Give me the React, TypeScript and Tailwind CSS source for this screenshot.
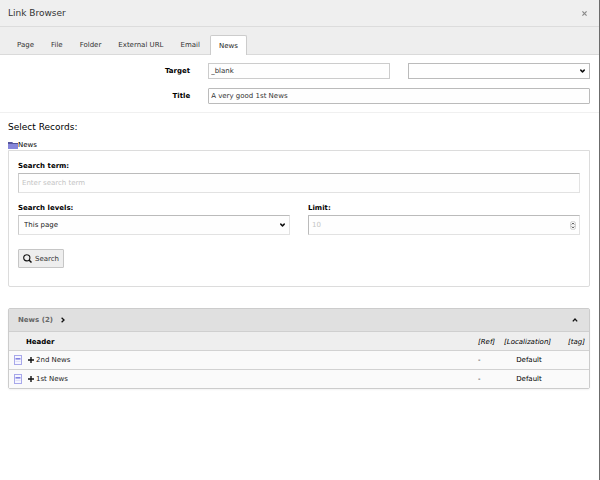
import React from 'react';
import { ChevronDown } from 'lucide-react';

interface NewsRecord {
  id: number;
  title: string;
  ref: string;
  localization: string;
}

const TABS = ['Page', 'File', 'Folder', 'External URL', 'Email', 'News'];

const RECORDS: NewsRecord[] = [
  { id: 2, title: '2nd News', ref: '-', localization: 'Default' },
  { id: 1, title: '1st News', ref: '-', localization: 'Default' },
];

const RecordIcon: React.FC = () => (
  <svg width="8" height="10" viewBox="0 0 8 10" className="block" aria-hidden="true">
    <rect x="0.5" y="0.5" width="7" height="9" fill="#f6f6ff" stroke="#a8a8ea" />
    <path d="M1.5 3h5v1.6h-5z" fill="#8484e0" />
    <path d="M1.5 6h5v0.8h-5z" fill="#dcdcf6" />
  </svg>
);

const FolderIcon: React.FC = () => (
  <svg width="10" height="7" viewBox="0 0 10 7" className="block shrink-0" aria-hidden="true">
    <path d="M0 0h4l1 1h5v6H0z" fill="#8686da" />
    <path d="M0 0h4l1 1h5v1H0z" fill="#55559c" />
  </svg>
);

const SearchIcon: React.FC = () => (
  <svg width="9" height="9" viewBox="0 0 9 9" fill="none" stroke="#111" aria-hidden="true">
    <circle cx="3.8" cy="3.8" r="3.1" strokeWidth="1.1" />
    <path d="M6 6l2.5 2.5" strokeWidth="1.5" />
  </svg>
);

const PlusIcon: React.FC = () => (
  <svg width="6" height="6" viewBox="0 0 6 6" stroke="#111" strokeWidth="1.4" aria-hidden="true">
    <path d="M3 0v6M0 3h6" />
  </svg>
);

const SpinnerIcon: React.FC = () => (
  <svg width="6" height="9" viewBox="0 0 6 9" fill="none" aria-hidden="true">
    <rect x="0.5" y="0.5" width="5" height="8" rx="2" fill="#f6f6f6" stroke="#d0d0d0" />
    <path d="M1.8 3.4L3 2.1l1.2 1.3M1.8 5.6L3 6.9l1.2-1.3" stroke="#444" strokeWidth="1" />
  </svg>
);

const Caret: React.FC = () => (
  <ChevronDown
    size={7}
    strokeWidth={5}
    className="pointer-events-none absolute top-1/2 right-1 -translate-y-1/2 text-[#111]"
  />
);

const field = 'block w-full appearance-none border bg-[#fefefe] text-[7px] outline-none';

export default function App() {
  return (
    <div className="min-h-screen border-r border-[#6b6b6b] bg-white font-['DejaVu_Sans',Verdana,sans-serif] text-[7px] leading-[10px] text-black">
      <header className="flex h-[27px] items-center justify-between border-b border-[#dcdcdc] bg-[#efefef] pr-3 pl-2">
        <h1 className="text-[9px] text-[#333]">Link Browser</h1>
        <button type="button" aria-label="Close" className="text-[#8a8a8a]">
          <svg width="5" height="5" viewBox="0 0 5 5" stroke="currentColor" strokeWidth="1.2" className="block">
            <path d="M0.4 0.4l4.2 4.2M4.6 0.4L0.4 4.6" />
          </svg>
        </button>
      </header>

      {/* Link type tabs */}
      <nav className="flex h-7 items-end gap-px border-b border-[#dadada] bg-[#eeeeee] pl-[9px]">
        {TABS.map((tab) => (
          <button
            key={tab}
            type="button"
            className={
              tab === 'News'
                ? '-mb-px ml-px h-5 rounded-t-xs border border-b-0 border-[#cccccc] bg-white px-2 text-[#222]'
                : 'h-[19px] px-2 text-[#333]'
            }
          >
            {tab}
          </button>
        ))}
      </nav>

      {/* Link attributes */}
      <form className="flex flex-col gap-[9px] border-b border-[#f0f0f0] py-2 pr-[9px] pl-2">
        <div className="flex items-center">
          <label htmlFor="target" className="w-[31.3%] text-right font-bold">Target</label>
          <div className="ml-[18px] grid flex-1 grid-cols-2 gap-[18px]">
            <input id="target" defaultValue="_blank" className={`${field} h-4 border-[#cccccc] px-[2px] text-[#333]`} />
            <div className="relative">
              <select aria-label="Target preset" className={`${field} h-4 border-[#bbbbbb] px-1`}>
                <option></option>
                <option>_top</option>
              </select>
              <Caret />
            </div>
          </div>
        </div>
        <div className="flex items-center">
          <label htmlFor="title" className="w-[31.3%] text-right font-bold">Title</label>
          <div className="ml-[18px] flex-1">
            <input
              id="title"
              defaultValue="A very good 1st News"
              className={`${field} h-4 rounded-[1px] border-[#bbbbbb] px-[2px] text-[#333]`}
            />
          </div>
        </div>
      </form>

      <main className="pt-2 pr-[9px] pl-2">
        <h2 className="text-[9px] leading-3">Select Records:</h2>
        <div className="mt-[7px] flex items-center">
          <FolderIcon />
          <span>News</span>
        </div>

        {/* Record search */}
        <form className="rounded-b-xs border border-[#dcdcdc] px-[9px] pt-[10px] pb-[18px]">
          <label htmlFor="term" className="block font-bold">Search term:</label>
          <input
            id="term"
            placeholder="Enter search term"
            className={`${field} mt-[2px] h-5 border-[#e2e2e2] border-t-[#bbbbbb] border-l-[#cccccc] px-[3px] placeholder:text-[#c4c4c4]`}
          />
          <div className="mt-[10px] grid grid-cols-2 gap-[18px]">
            <div>
              <label htmlFor="levels" className="block font-bold">Search levels:</label>
              <div className="relative mt-[2px]">
                <select id="levels" className={`${field} h-5 border-[#e2e2e2] border-t-[#bbbbbb] border-l-[#cccccc] px-[5px] text-[#222]`}>
                  <option>This page</option>
                  <option>1 level</option>
                </select>
                <Caret />
              </div>
            </div>
            <div>
              <label htmlFor="limit" className="block font-bold">Limit:</label>
              <div className="relative mt-[2px]">
                <input
                  id="limit"
                  inputMode="numeric"
                  placeholder="10"
                  className={`${field} h-5 border-[#e2e2e2] border-t-[#bbbbbb] border-l-[#bbbbbb] px-[3px] placeholder:text-[#c4c4c4]`}
                />
                <span className="pointer-events-none absolute inset-y-0 right-1 flex items-center">
                  <SpinnerIcon />
                </span>
              </div>
            </div>
          </div>
          <button
            type="button"
            className="mt-[14px] flex h-[19px] items-center gap-[3px] rounded-[1px] border border-[#c6c6c6] bg-[#eeeeee] px-1 text-[#333]"
          >
            <SearchIcon />
            Search
          </button>
        </form>

        {/* Record list */}
        <section className="mt-[21px] rounded-xs border border-[#cccccc] shadow-xs">
          <div className="flex h-[23px] items-center border-b border-[#cfcfcf] bg-[#e0e0e0] pr-[11px] pl-[9px]">
            <h3 className="font-bold text-[#666]">News (2)</h3>
            <svg width="4" height="6" viewBox="0 0 4 6" fill="none" stroke="#111" strokeWidth="1.3" className="ml-2">
              <path d="M0.6 0.8L3 3L0.6 5.2" />
            </svg>
            <button type="button" aria-label="Collapse" className="ml-auto">
              <svg width="6" height="4" viewBox="0 0 6 4" fill="none" stroke="#111" strokeWidth="1.3" className="block">
                <path d="M0.8 3.4L3 1L5.2 3.4" />
              </svg>
            </button>
          </div>
          <table className="w-full table-fixed border-collapse">
            <colgroup>
              <col className="w-[17px]" />
              <col />
              <col className="w-[24px]" />
              <col className="w-[60px]" />
              <col className="w-[27px]" />
            </colgroup>
            <thead>
              <tr className="h-[18px] bg-[#eeeeee]">
                <th></th>
                <th className="pt-[2px] text-left font-bold">Header</th>
                <th className="pt-[2px] text-left font-normal italic">[Ref]</th>
                <th className="pt-[2px] pl-[2px] text-left font-normal italic">[Localization]</th>
                <th className="pt-[2px] pr-1 text-right font-normal italic">[tag]</th>
              </tr>
            </thead>
            <tbody>
              {RECORDS.map((record) => (
                <tr key={record.id} className="h-[19px] border-t border-[#d2d2d2] bg-[#fafafa]">
                  <td className="pl-[5px]"><RecordIcon /></td>
                  <td>
                    <a href="#" className="flex items-center gap-[2px] pl-[2px] text-[#222]">
                      <PlusIcon />
                      {record.title}
                    </a>
                  </td>
                  <td>{record.ref}</td>
                  <td className="pr-[6px] text-center">{record.localization}</td>
                  <td></td>
                </tr>
              ))}
            </tbody>
          </table>
        </section>
      </main>
    </div>
  );
}
